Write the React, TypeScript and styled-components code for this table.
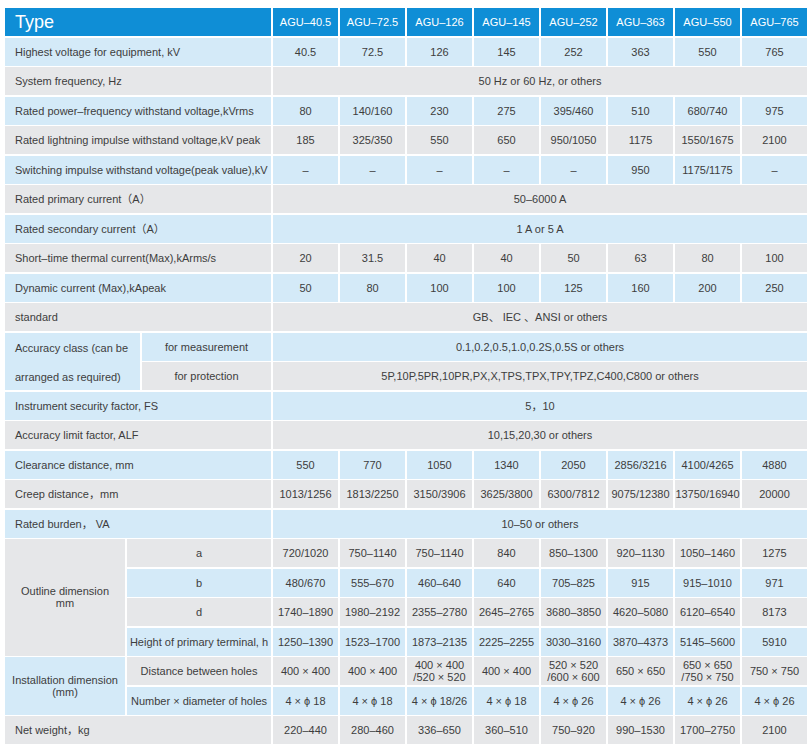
import React from "react";
import styled, { createGlobalStyle, css } from "styled-components";

const Global = createGlobalStyle`
  html, body { margin: 0; padding: 0; background: #ffffff; }
  body { padding: 8px 5px 0 5px; font-family: "Liberation Sans", Arial, "Noto Sans CJK SC", sans-serif; }
`;

type Tone = "head" | "blue" | "gray";

const Table = styled.div`
  display: grid;
  grid-template-columns: 120px 13px 129px repeat(8, 65px);
  grid-auto-rows: 28px;
  column-gap: 2px;
  row-gap: 1.5px;
  width: 802px;
  background: #ffffff;
  color: #3d3d3d;
  font-size: 11px;
`;

const tones: Record<Tone, string> = {
  head: "#0f8ed6",
  blue: "#d4eaf8",
  gray: "#e6e7e9",
};

const Cell = styled.div<{
  $tone: Tone;
  $col?: string;
  $rows?: number;
  $align?: "left" | "center";
}>`
  background: ${(p) => tones[p.$tone]};
  grid-column: ${(p) => p.$col ?? "auto"};
  ${(p) => p.$rows && css`grid-row: span ${p.$rows};`}
  display: flex;
  align-items: center;
  justify-content: ${(p) => (p.$align === "left" ? "flex-start" : "center")};
  text-align: ${(p) => (p.$align === "left" ? "left" : "center")};
  padding: ${(p) => (p.$align === "left" ? "0 0 0 10px" : "0")};
  white-space: nowrap;
  line-height: 12px;
  ${(p) => p.$tone === "head" && css`color: #ffffff;`}
`;

const TypeTitle = styled(Cell)`
  font-size: 18px;
  padding-left: 10px;
`;

const TwoLineLabel = styled(Cell)`
  line-height: 29.5px;
  white-space: normal;
  align-items: flex-start;
  padding-top: 1px;
`;

const StackLabel = styled(Cell)`
  flex-direction: column;
  line-height: 12px;
`;

const Two = styled.span`
  display: block;
  line-height: 12px;
`;

const types = ["AGU–40.5", "AGU–72.5", "AGU–126", "AGU–145", "AGU–252", "AGU–363", "AGU–550", "AGU–765"];

type Row = { label: string; tone: Tone; values: string[] | string };

const topRows: Row[] = [
  { label: "Highest voltage for equipment, kV", tone: "blue", values: ["40.5", "72.5", "126", "145", "252", "363", "550", "765"] },
  { label: "System frequency, Hz", tone: "gray", values: "50 Hz or 60 Hz, or others" },
  { label: "Rated power–frequency withstand voltage,kVrms", tone: "blue", values: ["80", "140/160", "230", "275", "395/460", "510", "680/740", "975"] },
  { label: "Rated lightning impulse withstand voltage,kV peak", tone: "gray", values: ["185", "325/350", "550", "650", "950/1050", "1175", "1550/1675", "2100"] },
  { label: "Switching impulse withstand voltage(peak value),kV", tone: "blue", values: ["–", "–", "–", "–", "–", "950", "1175/1175", "–"] },
  { label: "Rated primary current（A）", tone: "gray", values: "50–6000 A" },
  { label: "Rated secondary current（A）", tone: "blue", values: "1 A or 5 A" },
  { label: "Short–time thermal current(Max),kArms/s", tone: "gray", values: ["20", "31.5", "40", "40", "50", "63", "80", "100"] },
  { label: "Dynamic current  (Max),kApeak", tone: "blue", values: ["50", "80", "100", "100", "125", "160", "200", "250"] },
  { label: "standard", tone: "gray", values: "GB、 IEC 、ANSI or others" },
];

const midRows: Row[] = [
  { label: "Instrument security factor, FS", tone: "blue", values: "5，10" },
  { label: "Accuracy limit factor, ALF", tone: "gray", values: "10,15,20,30 or others" },
  { label: "Clearance distance, mm", tone: "blue", values: ["550", "770", "1050", "1340", "2050", "2856/3216", "4100/4265", "4880"] },
  { label: "Creep distance，mm", tone: "gray", values: ["1013/1256", "1813/2250", "3150/3906", "3625/3800", "6300/7812", "9075/12380", "13750/16940", "20000"] },
  { label: "Rated burden， VA", tone: "blue", values: "10–50 or others" },
];

const outlineRows: Row[] = [
  { label: "a", tone: "gray", values: ["720/1020", "750–1140", "750–1140", "840", "850–1300", "920–1130", "1050–1460", "1275"] },
  { label: "b", tone: "blue", values: ["480/670", "555–670", "460–640", "640", "705–825", "915", "915–1010", "971"] },
  { label: "d", tone: "gray", values: ["1740–1890", "1980–2192", "2355–2780", "2645–2765", "3680–3850", "4620–5080", "6120–6540", "8173"] },
  { label: "Height of primary terminal, h", tone: "blue", values: ["1250–1390", "1523–1700", "1873–2135", "2225–2255", "3030–3160", "3870–4373", "5145–5600", "5910"] },
];

const holes = ["400 × 400", "400 × 400", "400 × 400\n/520 × 520", "400 × 400", "520 × 520\n/600 × 600", "650 × 650", "650 × 650\n/750 × 750", "750 × 750"];
const holeNums = ["4 ×  ϕ 18", "4 ×  ϕ 18", "4 ×  ϕ 18/26", "4 ×  ϕ 18", "4 ×  ϕ 26", "4 ×  ϕ 26", "4 ×  ϕ 26", "4 ×  ϕ 26"];

const Values = ({ values, tone }: { values: string[] | string; tone: Tone }) =>
  typeof values === "string" ? (
    <Cell $tone={tone} $col="span 8">{values}</Cell>
  ) : (
    <>
      {values.map((v, i) => (
        <Cell key={i} $tone={tone}>
          {v.includes("\n") ? (
            <div>
              {v.split("\n").map((l, j) => (
                <Two key={j}>{l}</Two>
              ))}
            </div>
          ) : (
            v
          )}
        </Cell>
      ))}
    </>
  );

const FullRow = ({ row }: { row: Row }) => (
  <>
    <Cell $tone={row.tone} $col="span 3" $align="left">{row.label}</Cell>
    <Values values={row.values} tone={row.tone} />
  </>
);

export default function App() {
  return (
    <>
      <Global />
      <Table>
        <TypeTitle $tone="head" $col="span 3" $align="left">Type</TypeTitle>
        {types.map((t) => (
          <Cell key={t} $tone="head">{t}</Cell>
        ))}

        {topRows.map((r) => (
          <FullRow key={r.label} row={r} />
        ))}

        <TwoLineLabel $tone="blue" $col="span 2" $rows={2} $align="left">
          Accuracy class (can be arranged as required)
        </TwoLineLabel>
        <Cell $tone="blue">for measurement</Cell>
        <Values values="0.1,0.2,0.5,1.0,0.2S,0.5S or others" tone="blue" />
        <Cell $tone="gray">for protection</Cell>
        <Values values="5P,10P,5PR,10PR,PX,X,TPS,TPX,TPY,TPZ,C400,C800 or others" tone="gray" />

        {midRows.map((r) => (
          <FullRow key={r.label} row={r} />
        ))}

        <StackLabel $tone="gray" $rows={4}>
          <span>Outline dimension</span>
          <span>mm</span>
        </StackLabel>
        {outlineRows.map((r) => (
          <React.Fragment key={r.label}>
            <Cell $tone={r.tone} $col="span 2">{r.label}</Cell>
            <Values values={r.values} tone={r.tone} />
          </React.Fragment>
        ))}

        <StackLabel $tone="blue" $rows={2}>
          <span>Installation dimension</span>
          <span>(mm)</span>
        </StackLabel>
        <Cell $tone="gray" $col="span 2">Distance between holes</Cell>
        <Values values={holes} tone="gray" />
        <Cell $tone="blue" $col="span 2">Number  ×  diameter of holes</Cell>
        <Values values={holeNums} tone="blue" />

        <FullRow row={{ label: "Net weight，kg", tone: "gray", values: ["220–440", "280–460", "336–650", "360–510", "750–920", "990–1530", "1700–2750", "2100"] }} />
      </Table>
    </>
  );
}
